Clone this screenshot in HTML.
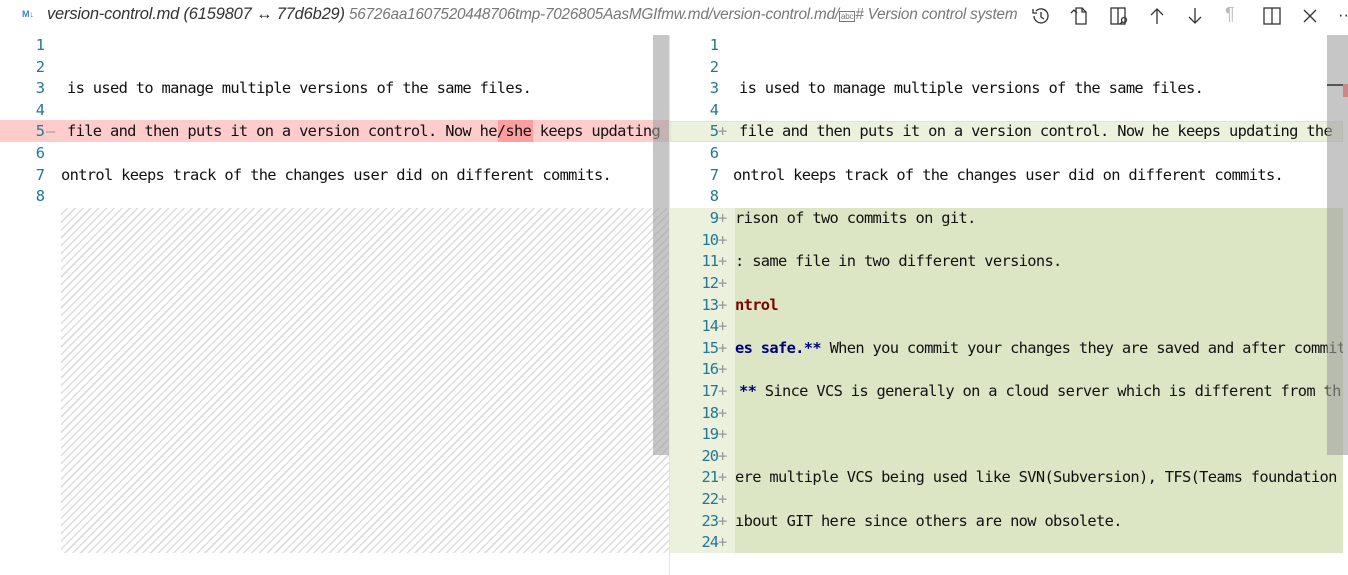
<!DOCTYPE html>
<html><head><meta charset="utf-8"><style>
*{margin:0;padding:0;box-sizing:border-box}
body{width:1348px;height:575px;overflow:hidden;background:#fff;font-family:"Liberation Sans",sans-serif;position:relative}
.hdr{position:absolute;left:0;top:0;width:1348px;height:34px;font-size:16.5px;font-style:italic;color:#333;white-space:nowrap;overflow:hidden}
.hdr .t{position:absolute;left:47px;top:5px;letter-spacing:-0.2px}
.hdr .p{position:absolute;left:349px;top:6px;color:#777;font-size:15.3px;letter-spacing:-0.2px;width:675px;overflow:hidden;direction:rtl;text-align:left}
.ic{position:absolute;top:5px}
.mono{font-family:"DejaVu Sans Mono",monospace;font-size:15.4px;letter-spacing:-0.67px}
.ln{position:absolute;height:21.6px;line-height:23px;white-space:pre;color:#111}
.num{position:absolute;height:21.6px;line-height:23px;color:#237893;text-align:right;width:30px;letter-spacing:-1px}
.sg{position:absolute;height:21.6px;line-height:23px;color:#999}
.hatch{position:absolute;background:repeating-linear-gradient(135deg,#fff 0 4px,#ddd 4px 5.5px)}
</style></head><body>
<div class="hdr">
<span style="position:absolute;left:22px;top:9px;font-size:9px;font-style:normal;color:#3f84c6;font-weight:bold">M↓</span>
<span class="t">version-control.md (6159807 ↔ 77d6b29)</span>
<span class="p"><bdi>56726aa1607520448706tmp-7026805AasMGIfmw.md/version-control.md/<span style="font-style:normal;font-size:8px;border:1px solid #777;padding:0 1px">abc</span># Version control system</bdi></span>
<svg class="ic" style="left:1030px" width="22" height="22" viewBox="0 0 22 22" fill="none" stroke="#333" stroke-width="1.3"><path d="M4 11a7 7 0 1 0 2-5"/><path d="M3 4v4h4"/><path d="M11 7v5l3 2"/></svg>
<svg class="ic" style="left:1068px" width="22" height="22" viewBox="0 0 22 22" fill="none" stroke="#333" stroke-width="1.3"><path d="M8 3h6l4 4v12H8z"/><path d="M14 3v4h4"/><path d="M3 8l3-3 3 3"/></svg>
<svg class="ic" style="left:1108px" width="22" height="22" viewBox="0 0 22 22" fill="none" stroke="#333" stroke-width="1.3"><rect x="3" y="3" width="14" height="16"/><path d="M10 3v16"/><circle cx="16" cy="15" r="2.5"/><path d="M14 17l-2 2"/></svg>
<svg class="ic" style="left:1146px" width="22" height="22" viewBox="0 0 22 22" fill="none" stroke="#333" stroke-width="1.3"><path d="M11 19V4M5 10l6-6 6 6"/></svg>
<svg class="ic" style="left:1184px" width="22" height="22" viewBox="0 0 22 22" fill="none" stroke="#333" stroke-width="1.3"><path d="M11 3v15M5 12l6 6 6-6"/></svg>
<span style="position:absolute;left:1225px;top:4px;color:#bbb;font-size:18px;font-style:normal">¶</span>
<svg class="ic" style="left:1261px" width="22" height="22" viewBox="0 0 22 22" fill="none" stroke="#333" stroke-width="1.3"><rect x="3" y="3" width="16" height="16"/><path d="M11 3v16"/></svg>
<svg class="ic" style="left:1299px" width="22" height="22" viewBox="0 0 22 22" fill="none" stroke="#333" stroke-width="1.3"><path d="M5 5l12 12M17 5L5 17"/></svg>
<span style="position:absolute;left:1338px;top:6px;font-style:normal;color:#333">··</span>
</div>

<!-- left pane -->
<div style="position:absolute;left:0;top:120px;width:669px;height:21.6px;background:#ffcccc"></div>
<div style="position:absolute;left:498px;top:120px;width:35px;height:21.6px;background:#ff9e9e"></div>
<div class="hatch" style="left:61px;top:208px;width:609px;height:345px"></div>
<div class="mono">
<div class="num" style="left:14px;top:34px">1</div>
<div class="num" style="left:14px;top:56px">2</div>
<div class="num" style="left:14px;top:77px">3</div>
<div class="num" style="left:14px;top:99px">4</div>
<div class="num" style="left:14px;top:120px">5</div><div class="sg" style="left:46px;top:120px">—</div>
<div class="num" style="left:14px;top:142px">6</div>
<div class="num" style="left:14px;top:164px">7</div>
<div class="num" style="left:14px;top:185px">8</div>
<div class="ln" style="left:67px;top:77px">is used to manage multiple versions of the same files.</div>
<div class="ln" style="left:67px;top:120px;width:602px;overflow:hidden">file and then puts it on a version control. Now he/she keeps updating</div>
<div class="ln" style="left:61px;top:164px">ontrol keeps track of the changes user did on different commits.</div>
</div>
<div style="position:absolute;left:653px;top:35px;width:16px;height:420px;background:rgba(160,160,160,0.6)"></div>

<!-- right pane -->
<div style="position:absolute;left:669px;top:35px;width:1px;height:540px;background:#e4e4e4"></div>
<div style="position:absolute;left:670px;top:121px;width:673px;height:21px;background:#ebf1dd;border:1px solid #dfe6cf"></div>
<div style="position:absolute;left:670px;top:208px;width:65px;height:345px;background:#ebf1dd"></div>
<div style="position:absolute;left:735px;top:208px;width:608px;height:345px;background:#dce6c4"></div>
<div class="mono">
<div class="num" style="left:688px;top:34px">1</div>
<div class="num" style="left:688px;top:56px">2</div>
<div class="num" style="left:688px;top:77px">3</div>
<div class="num" style="left:688px;top:99px">4</div>
<div class="num" style="left:688px;top:120px">5</div>
<div class="num" style="left:688px;top:142px">6</div>
<div class="num" style="left:688px;top:164px">7</div>
<div class="num" style="left:688px;top:185px">8</div>
<div class="sg" style="left:718px;top:120px">+</div>
<div class="ln" style="left:739px;top:77px">is used to manage multiple versions of the same files.</div>
<div class="ln" style="left:739px;top:120px;width:604px;overflow:hidden">file and then puts it on a version control. Now he keeps updating the</div>
<div class="ln" style="left:733px;top:164px">ontrol keeps track of the changes user did on different commits.</div>

<div class="num" style="left:688px;top:207px">9</div>
<div class="num" style="left:688px;top:229px">10</div>
<div class="num" style="left:688px;top:250px">11</div>
<div class="num" style="left:688px;top:272px">12</div>
<div class="num" style="left:688px;top:294px">13</div>
<div class="num" style="left:688px;top:315px">14</div>
<div class="num" style="left:688px;top:337px">15</div>
<div class="num" style="left:688px;top:358px">16</div>
<div class="num" style="left:688px;top:380px">17</div>
<div class="num" style="left:688px;top:402px">18</div>
<div class="num" style="left:688px;top:423px">19</div>
<div class="num" style="left:688px;top:445px">20</div>
<div class="num" style="left:688px;top:466px">21</div>
<div class="num" style="left:688px;top:488px">22</div>
<div class="num" style="left:688px;top:510px">23</div>
<div class="num" style="left:688px;top:531px">24</div>
<div class="sg" style="left:718px;top:207px">+</div><div class="sg" style="left:718px;top:229px">+</div><div class="sg" style="left:718px;top:250px">+</div><div class="sg" style="left:718px;top:272px">+</div><div class="sg" style="left:718px;top:294px">+</div><div class="sg" style="left:718px;top:315px">+</div><div class="sg" style="left:718px;top:337px">+</div><div class="sg" style="left:718px;top:358px">+</div><div class="sg" style="left:718px;top:380px">+</div><div class="sg" style="left:718px;top:402px">+</div><div class="sg" style="left:718px;top:423px">+</div><div class="sg" style="left:718px;top:445px">+</div><div class="sg" style="left:718px;top:466px">+</div><div class="sg" style="left:718px;top:488px">+</div><div class="sg" style="left:718px;top:510px">+</div><div class="sg" style="left:718px;top:531px">+</div>
<div class="ln" style="left:735px;top:207px">rison of two commits on git.</div>
<div class="ln" style="left:735px;top:250px">: same file in two different versions.</div>
<div class="ln" style="left:735px;top:294px;color:#800000;font-weight:bold">ntrol</div>
<div class="ln" style="left:735px;top:337px;width:608px;overflow:hidden"><b style="color:#000080">es safe.**</b> When you commit your changes they are saved and after commit</div>
<div class="ln" style="left:739px;top:380px;width:604px;overflow:hidden"><b style="color:#000080">**</b> Since VCS is generally on a cloud server which is different from th</div>
<div class="ln" style="left:735px;top:466px;width:608px;overflow:hidden">ere multiple VCS being used like SVN(Subversion), TFS(Teams foundation</div>
<div class="ln" style="left:735px;top:510px">ıbout GIT here since others are now obsolete.</div>
</div>
<div style="position:absolute;left:1327px;top:35px;width:21px;height:420px;background:rgba(160,160,160,0.6)"></div>
<div style="position:absolute;left:1327px;top:84px;width:16px;height:2px;background:#555"></div>
<div style="position:absolute;left:1343px;top:84px;width:5px;height:13px;background:#c88"></div>
</body></html>
